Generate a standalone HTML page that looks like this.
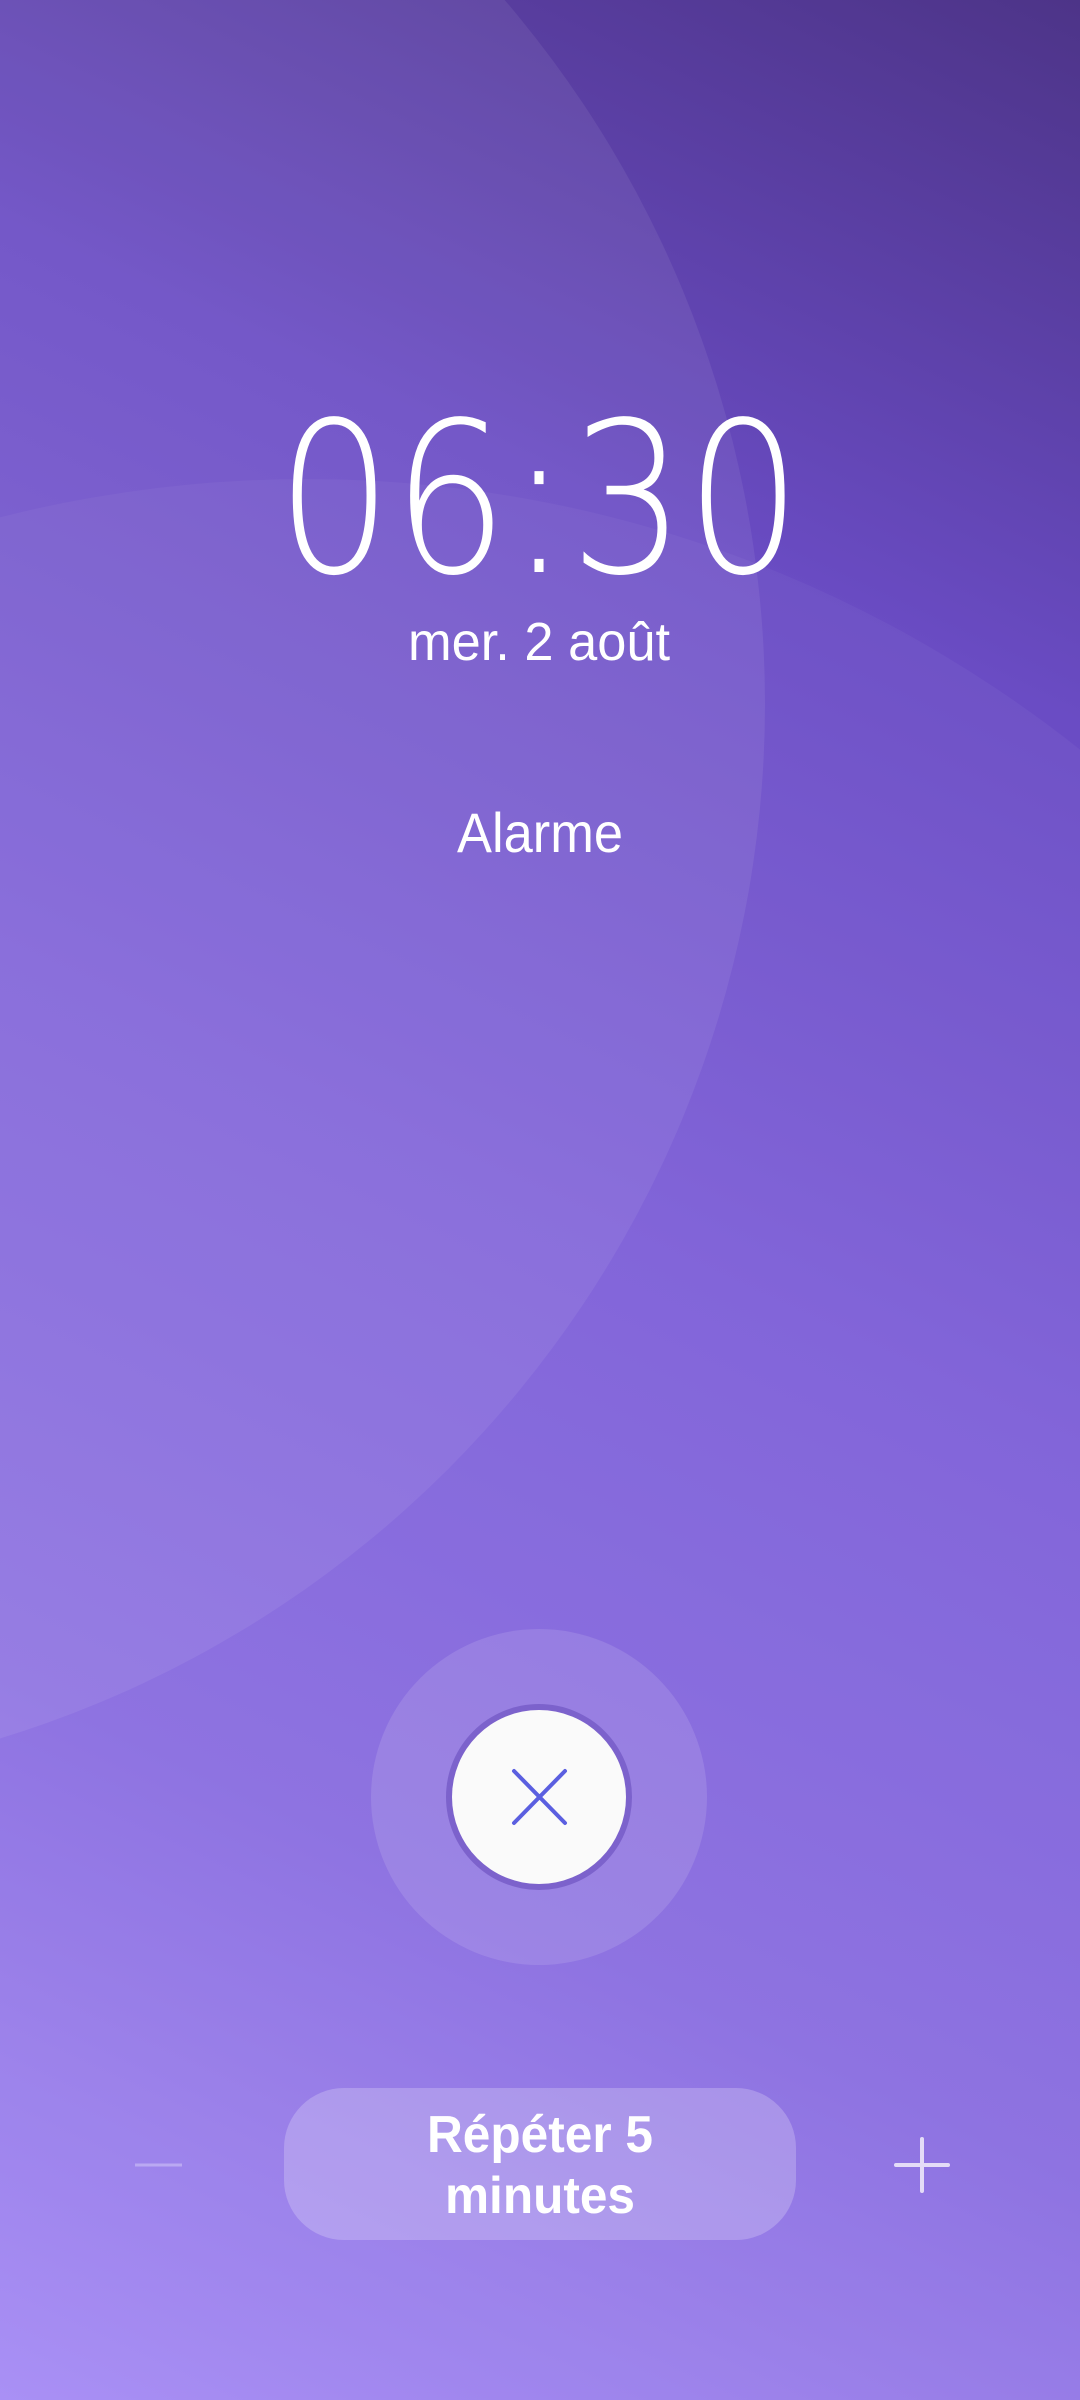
<!DOCTYPE html>
<html><head><meta charset="utf-8"><style>
html,body{margin:0;padding:0;width:1080px;height:2400px;overflow:hidden}
body{background:linear-gradient(205deg,#4d3488 0%,#6a4cc4 25%,#7d5fd8 50%,#8a6ee0 75%,#a68cf5 100%)}
svg{position:absolute;left:0;top:0}
</style></head><body>
<svg width="1080" height="2400" viewBox="0 0 1080 2400" xmlns="http://www.w3.org/2000/svg">
<circle cx="-317" cy="704" r="1082" fill="#ffffff" fill-opacity="0.07"/>
<circle cx="306" cy="1721" r="1242" fill="#ffffff" fill-opacity="0.04"/>
<g fill="#ffffff" font-family="'Liberation Sans',sans-serif" text-anchor="middle">
<text x="539" y="572" font-family="'DejaVu Sans','Liberation Sans',sans-serif" font-weight="200" font-size="210" textLength="525" lengthAdjust="spacingAndGlyphs">06:30</text>
<text x="539" y="660" font-size="54" textLength="262" lengthAdjust="spacingAndGlyphs">mer. 2 août</text>
<text x="540" y="852" font-size="56" textLength="166" lengthAdjust="spacingAndGlyphs">Alarme</text>
</g>
<circle cx="539" cy="1797" r="168" fill="#ffffff" fill-opacity="0.12"/>
<circle cx="539" cy="1797" r="93" fill="#7c62cc"/>
<circle cx="539" cy="1797" r="87" fill="#fafafa"/>
<path d="M514 1771 L565 1823 M565 1771 L514 1823" stroke="#5b5fe0" stroke-width="4" stroke-linecap="round"/>
<rect x="284" y="2088" width="512" height="152" rx="60" fill="#ffffff" fill-opacity="0.22"/>
<g fill="#ffffff" font-family="'Liberation Sans',sans-serif" font-weight="bold" text-anchor="middle" font-size="52">
<text x="540" y="2152" textLength="226" lengthAdjust="spacingAndGlyphs">Répéter 5</text>
<text x="540" y="2213" textLength="190" lengthAdjust="spacingAndGlyphs">minutes</text>
</g>
<path d="M135 2165 H182" stroke="#ffffff" stroke-opacity="0.3" stroke-width="3"/>
<path d="M896 2165 H948 M922 2139 V2191" stroke="#e4dcf7" stroke-width="4" stroke-linecap="round"/>
</svg>
</body></html>
